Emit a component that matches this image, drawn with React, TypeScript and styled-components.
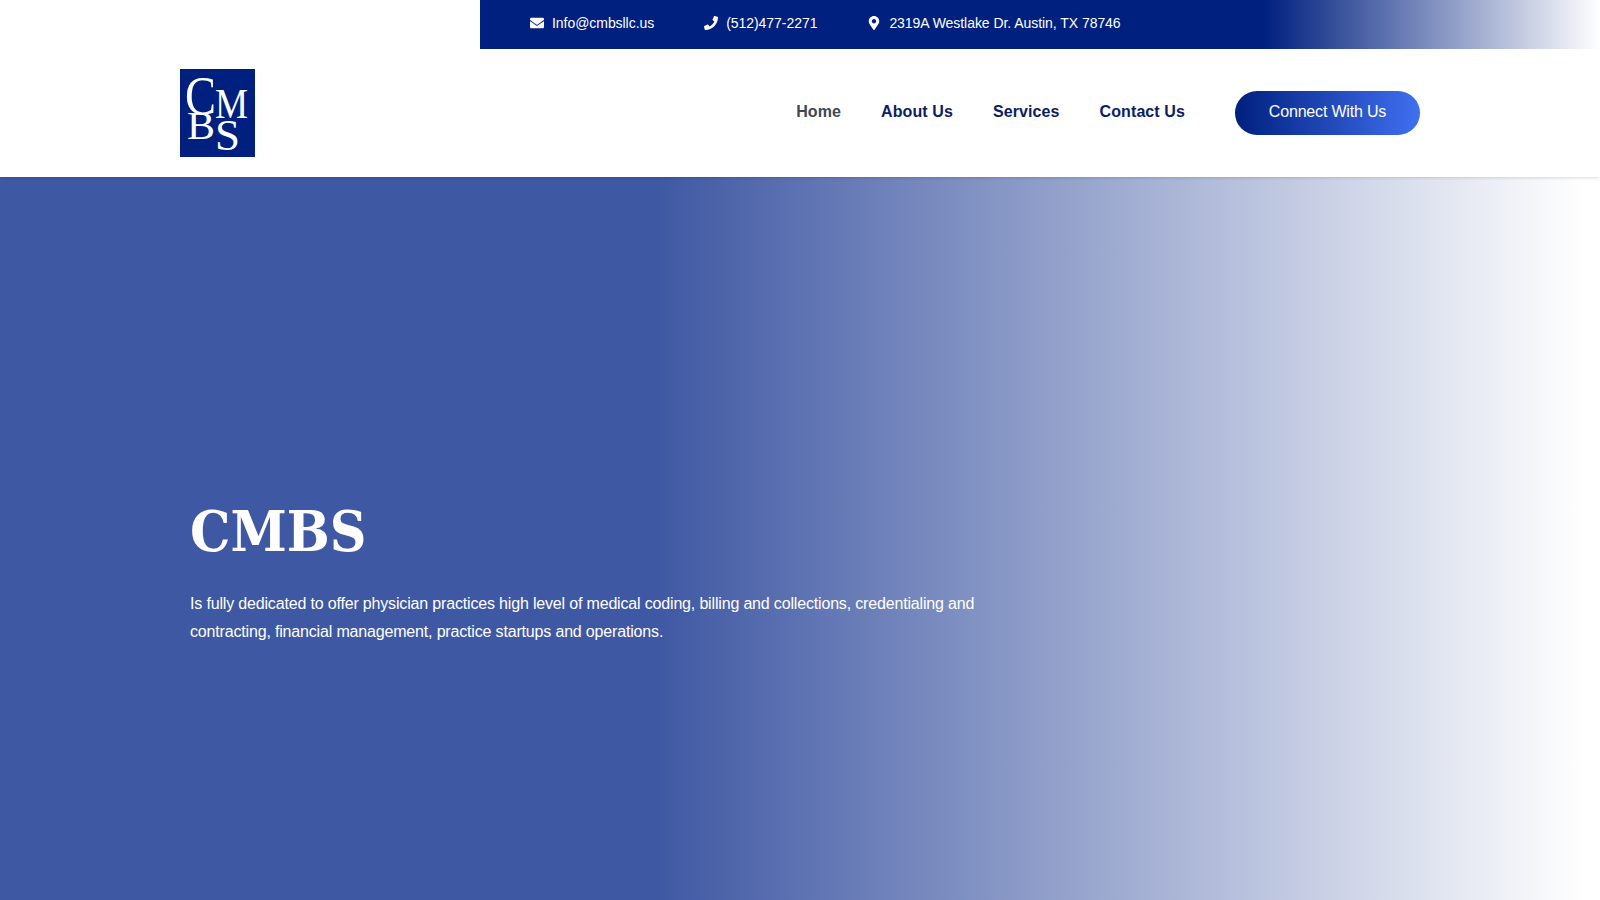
import React from "react";
import styled, { createGlobalStyle } from "styled-components";
import { FaEnvelope, FaMapMarkerAlt, FaPhone } from "react-icons/fa";

const GlobalStyle = createGlobalStyle`
  html, body {
    margin: 0;
    padding: 0;
    background: #fff;
    font-family: "Liberation Sans", Arial, sans-serif;
  }
`;

const Page = styled.div`
  width: 100%;
  height: 900px;
  overflow: hidden;
  display: flex;
  flex-direction: column;
`;

const TopBar = styled.div`
  margin-left: 30%;
  height: 49px;
  padding-left: 50px;
  display: flex;
  align-items: center;
  gap: 50px;
  color: #fff;
  font-size: 14px;
  letter-spacing: -0.05px;
  background: linear-gradient(90deg, #00207f 0%, #00207f 70%, #ffffff 100%);
`;

const Contact = styled.div`
  display: flex;
  align-items: center;
  gap: 8px;
  margin-top: -3px;

  svg {
    width: 14px;
    height: 14px;
  }
`;

const Header = styled.header`
  height: 128px;
  padding: 0 180px;
  display: flex;
  align-items: center;
  justify-content: space-between;
  position: relative;
  z-index: 1;
  box-shadow: 0 2px 3px -1px rgba(0, 0, 0, 0.14);
  background: #fff;
`;

const Logo = styled.svg`
  display: block;
  width: 75px;
  height: 88px;
  margin-top: -1px;
`;

const Nav = styled.nav`
  display: flex;
  align-items: center;
  gap: 40px;
`;

const NavLink = styled.a<{ $active?: boolean }>`
  margin-top: -2px;
  font-size: 16px;
  font-weight: 700;
  letter-spacing: 0.1px;
  color: ${(p) => (p.$active ? "#3c4858" : "#0b1d63")};
  text-decoration: none;
`;

const ConnectButton = styled.a`
  margin-left: 10px;
  width: 185px;
  height: 44px;
  display: flex;
  align-items: center;
  justify-content: center;
  border-radius: 22px;
  color: #fff;
  font-size: 16px;
  letter-spacing: -0.18px;
  padding-bottom: 2px;
  box-sizing: border-box;
  background: linear-gradient(90deg, #00207f 0%, #4070f0 100%);
`;

const Hero = styled.section`
  flex: 1;
  padding: 319px 190px 0;
  color: #fff;
  background: linear-gradient(90deg, #3f58a3 0%, #3f58a3 41%, #ffffff 99%);
`;

const Title = styled.h1`
  margin: 0 0 24px;
  font-family: "DejaVu Serif", "Liberation Serif", serif;
  font-stretch: condensed;
  font-size: 56.5px;
  line-height: 70px;
  font-weight: 700;
`;

const Lead = styled.p`
  margin: 0;
  width: 800px;
  font-size: 16px;
  line-height: 28px;
  letter-spacing: -0.17px;
`;

function App() {
  return (
    <Page>
      <GlobalStyle />
      <TopBar>
        <Contact>
          <FaEnvelope />
          Info@cmbsllc.us
        </Contact>
        <Contact>
          <FaPhone />
          (512)477-2271
        </Contact>
        <Contact>
          <FaMapMarkerAlt />
          2319A Westlake Dr. Austin, TX 78746
        </Contact>
      </TopBar>
      <Header>
        <Logo viewBox="0 0 75 88">
          <rect width="75" height="88" fill="#00207f" />
          <g fill="#fff" fontFamily="Liberation Serif, serif">
            <text x="5" y="45" fontSize="54" textLength="31" lengthAdjust="spacingAndGlyphs">C</text>
            <text x="35" y="49" fontSize="43" textLength="33" lengthAdjust="spacingAndGlyphs">M</text>
            <text x="7" y="70" fontSize="41" textLength="28" lengthAdjust="spacingAndGlyphs">B</text>
            <text x="35" y="81" fontSize="45" textLength="25" lengthAdjust="spacingAndGlyphs">S</text>
          </g>
        </Logo>
        <Nav>
          <NavLink $active>Home</NavLink>
          <NavLink>About Us</NavLink>
          <NavLink>Services</NavLink>
          <NavLink>Contact Us</NavLink>
          <ConnectButton>Connect With Us</ConnectButton>
        </Nav>
      </Header>
      <Hero>
        <Title>CMBS</Title>
        <Lead>
          Is fully dedicated to offer physician practices high level of medical
          coding, billing and collections, credentialing and contracting,
          financial management, practice startups and operations.
        </Lead>
      </Hero>
    </Page>
  );
}

export default App;
